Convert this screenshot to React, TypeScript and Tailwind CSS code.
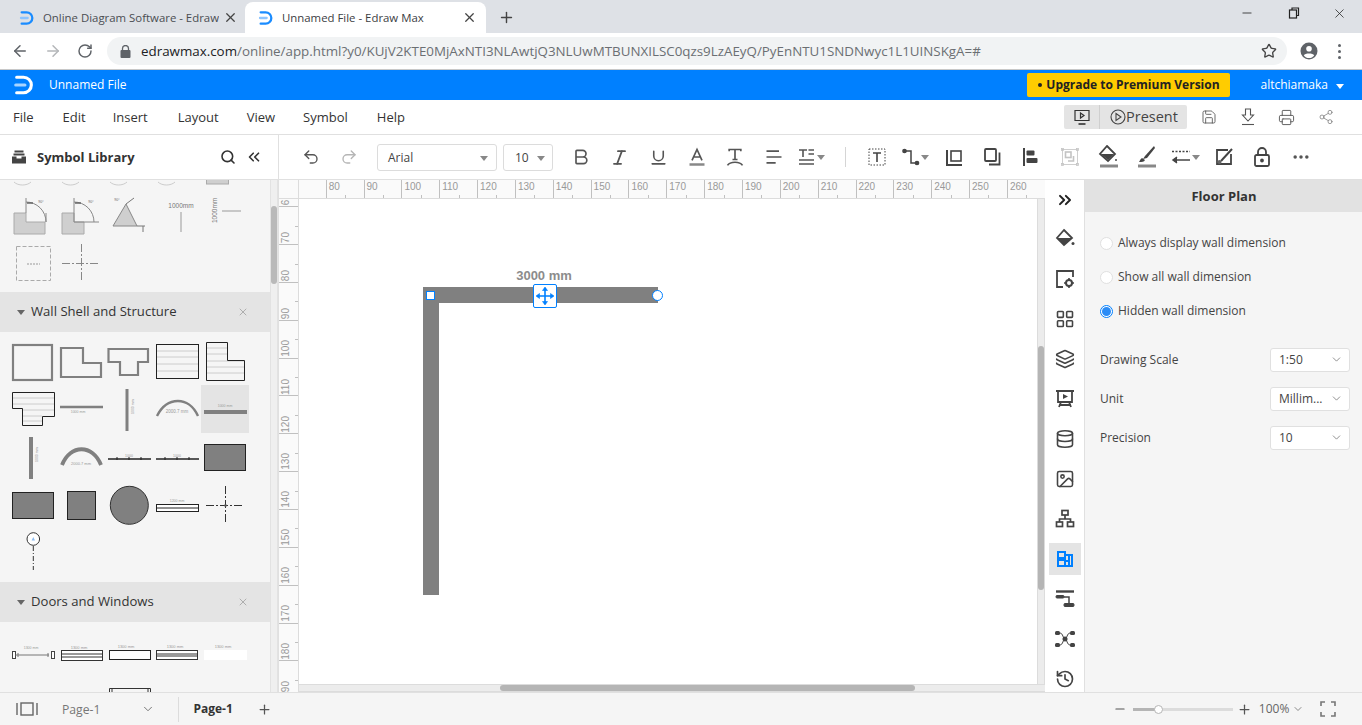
import type { ReactNode } from "react"
import {
  ArrowLeft, ArrowRight, RotateCw, Star, X, Plus, Minus, Search, ChevronsLeft, ChevronsRight,
  ChevronDown, Undo2, Redo2, Bold, Italic, Underline, Share2, Printer, Save, MoreHorizontal,
  Layers, Database, Image, History, LayoutGrid,
} from "lucide-react"

// ── Small helpers ─────────────────────────────────────────────
const BLUE = "#0080ff"
const RULER_TOP = [80, 90, 100, 110, 120, 130, 140, 150, 160, 170, 180, 190, 200, 210, 220, 230, 240, 250, 260]
const RULER_LEFT = [60, 70, 80, 90, 100, 110, 120, 130, 140, 150, 160, 170, 180, 190]

function Svg({ size = 20, children, stroke = "#444", w = 2 }: { size?: number; children: ReactNode; stroke?: string; w?: number }) {
  return (
    <svg width={size} height={size} viewBox="0 0 24 24" fill="none" stroke={stroke} strokeWidth={w} strokeLinecap="butt" strokeLinejoin="miter">
      {children}
    </svg>
  )
}

function Logo({ color, bar, size = 18 }: { color: string; bar: string; size?: number }) {
  return (
    <svg width={size} height={size} viewBox="0 0 24 24" fill="none">
      <path d="M4 3.5H11.5A8.5 8.5 0 0 1 11.5 20.5H4" stroke={color} strokeWidth="3.4" strokeLinecap="round" />
      <path d="M3 12H13" stroke={bar} strokeWidth="3.4" strokeLinecap="round" />
    </svg>
  )
}

function Caret({ color = "#888" }: { color?: string }) {
  return <span className="inline-block w-0 h-0 border-x-[4px] border-x-transparent border-t-[5px]" style={{ borderTopColor: color }} />
}

function Cell({ children }: { children: ReactNode }) {
  return <div className="w-[38.5px] h-full shrink-0 flex items-center justify-center">{children}</div>
}

// ── Browser chrome ────────────────────────────────────────────
function BrowserChrome() {
  return (
    <div className="font-['Open_Sans',sans-serif] shrink-0">
      <div className="h-[33px] bg-[#dee1e6] flex items-end relative">
        <div className="w-[245px] h-[31px] flex items-center pl-[19px] pr-[7px] text-[11.4px] text-[#4a4d52]">
          <Logo color="#1a8cff" bar="#8cc4ff" size={16} />
          <span className="ml-[8px] w-[176px] whitespace-nowrap overflow-hidden">Online Diagram Software - Edraw</span>
          <X size={15} strokeWidth={2} className="ml-auto text-[#444]" />
        </div>
        <div className="w-[241px] h-[31px] bg-white rounded-t-[8px] flex items-center pl-[13px] pr-[9px] text-[11.4px] text-[#3c4043]">
          <Logo color="#1a8cff" bar="#8cc4ff" size={16} />
          <span className="ml-[8px] whitespace-nowrap">Unnamed File - Edraw Max</span>
          <X size={15} strokeWidth={2} className="ml-auto text-[#444]" />
        </div>
        <div className="ml-[12px] h-[31px] flex items-center">
          <Plus size={17} strokeWidth={2} className="text-[#444]" />
        </div>
        <div className="ml-auto h-[33px] flex items-start pt-[6px] pr-[15px] text-[#222]">
          <Minus size={14} strokeWidth={1.4} className="mr-[33px]" />
          <svg width="14" height="14" viewBox="0 0 14 14" fill="none" stroke="#222" strokeWidth="1.2" className="mr-[31px]">
            <rect x="2.5" y="4" width="7" height="8" />
            <path d="M5 4V2H11.5V9.5H9.5" />
          </svg>
          <X size={15} strokeWidth={1.2} />
        </div>
      </div>
      <div className="h-[36px] bg-white flex items-center border-b border-[#c8c8c8] box-content">
        <div className="w-[107px] flex items-center pl-[11px] text-[#5f6368]">
          <ArrowLeft size={18} strokeWidth={2} />
          <ArrowRight size={18} strokeWidth={2} className="ml-[15px] text-[#b4b6b9]" />
          <RotateCw size={16} strokeWidth={2.2} className="ml-[15px]" />
        </div>
        <div className="w-[1180px] h-[28px] bg-[#f1f3f4] rounded-full flex items-center pl-[13px] pr-[10px]">
          <svg width="11" height="13" viewBox="0 0 11 13" fill="#5f6368">
            <rect x="0.5" y="5" width="10" height="8" rx="1" />
            <path d="M2.5 5.5V3.5a3 3 0 0 1 6 0v2" fill="none" stroke="#5f6368" strokeWidth="1.3" />
          </svg>
          <span className="ml-[10px] text-[13.37px] whitespace-nowrap text-[#6b6f73]">
            <span className="text-[#202124]">edrawmax.com</span>/online/app.html?y0/KUjV2KTE0MjAxNTI3NLAwtjQ3NLUwMTBUNXILSC0qzs9LzAEyQ/PyEnNTU1SNDNwyc1L1UINSKgA=#
          </span>
          <Star size={16} strokeWidth={2} className="ml-auto text-[#444]" />
        </div>
        <svg width="18" height="18" viewBox="0 0 18 18" className="ml-[13px]">
          <circle cx="9" cy="9" r="8.5" fill="#5f6368" />
          <circle cx="9" cy="6.8" r="2.8" fill="#fff" />
          <path d="M3.8 13.4C5 11 13 11 14.2 13.4C13 15 11 16 9 16S5 15 3.8 13.4Z" fill="#fff" />
        </svg>
        <div className="ml-[20px] flex flex-col gap-[3px]">
          <span className="w-[3px] h-[3px] rounded-full bg-[#5f6368]" />
          <span className="w-[3px] h-[3px] rounded-full bg-[#5f6368]" />
          <span className="w-[3px] h-[3px] rounded-full bg-[#5f6368]" />
        </div>
      </div>
    </div>
  )
}

// ── App header rows ───────────────────────────────────────────
function TitleBar() {
  return (
    <div className="h-[30px] shrink-0 flex items-center text-white text-[12px]" style={{ background: BLUE }}>
      <div className="ml-[13px]"><Logo color="#fff" bar="#a8d4ff" size={22} /></div>
      <span className="ml-[14px]">Unnamed File</span>
      <div className="ml-auto h-[24px] w-[203px] rounded-[2px] bg-[#ffcc00] flex items-center justify-center text-[12px] font-bold text-[#222] whitespace-nowrap">
        <span className="w-[4px] h-[4px] rounded-full bg-[#222] mr-[4px]" />Upgrade to Premium Version
      </div>
      <span className="ml-[30px]">altchiamaka</span>
      <span className="ml-[8px] mr-[18px]"><Caret color="#fff" /></span>
    </div>
  )
}

function MenuBar() {
  const items: [string, number][] = [["File", 13], ["Edit", 29], ["Insert", 27], ["Layout", 30], ["View", 28], ["Symbol", 28], ["Help", 29]]
  return (
    <div className="h-[35px] shrink-0 bg-white border-b border-[#e0e0e0] flex items-center text-[13px] text-[#333]">
      {items.map(([label, gap]) => (
        <span key={label} className="pt-[1px]" style={{ marginLeft: gap }}>{label}</span>
      ))}
      <div className="ml-auto h-[24px] w-[123px] bg-[#e4e4e4] rounded-[2px] flex items-center">
        <div className="w-[36px] h-full border-r border-[#cfcfcf] flex items-center justify-center">
          <svg width="16" height="17" viewBox="0 0 16 17" fill="none" stroke="#333" strokeWidth="1.2">
            <path d="M1 1.5H15V11.5H1Z" />
            <path d="M6.5 4L10 6.5L6.5 9Z" />
            <path d="M4.5 15H11.5" strokeWidth="1.6" />
          </svg>
        </div>
        <svg width="16" height="16" viewBox="0 0 16 16" fill="none" stroke="#444" strokeWidth="1.1" className="ml-[10px]">
          <circle cx="8" cy="8" r="7" />
          <path d="M6 4.5L11 8L6 11.5Z" />
        </svg>
        <span className="text-[14.5px] text-[#444]">Present</span>
      </div>
      <div className="w-[39px] ml-[2px] flex justify-center"><Save size={16} strokeWidth={1.3} className="text-[#555]" /></div>
      <div className="w-[39px] flex justify-center">
        <svg width="16" height="18" viewBox="0 0 16 18" fill="none" stroke="#555" strokeWidth="1.1">
          <path d="M5.5 1H10.5V7H13.5L8 13L2.5 7H5.5Z" />
          <path d="M2 16.5H14" />
        </svg>
      </div>
      <div className="w-[39px] flex justify-center"><Printer size={17} strokeWidth={1.3} className="text-[#555]" /></div>
      <div className="w-[39px] mr-[17px] flex justify-center"><Share2 size={16} strokeWidth={1.1} className="text-[#777]" /></div>
    </div>
  )
}

function Toolbar() {
  return (
    <div className="h-[45px] shrink-0 bg-white border-b border-[#e0e0e0] flex items-center">
      <div className="w-[279px] h-full border-r border-[#e0e0e0] flex items-center pl-[12px] shrink-0">
        <svg width="14" height="14" viewBox="0 0 14 14" fill="#444">
          <rect x="2.5" y="0.5" width="9" height="2" />
          <rect x="1.5" y="3.5" width="11" height="2" />
          <path d="M0 6.5H4.5V8.5H9.5V6.5H14V13.5H0Z" />
        </svg>
        <span className="ml-[11px] pt-[1px] text-[13px] font-bold text-[#333]">Symbol Library</span>
        <Search size={16} strokeWidth={2.4} className="ml-auto text-[#333]" />
        <ChevronsLeft size={18} strokeWidth={2.2} className="ml-[9px] mr-[15px] text-[#333]" />
      </div>
      <div className="ml-[13px] w-[38px] flex justify-center"><Undo2 size={18} strokeWidth={1.8} className="text-[#555]" /></div>
      <div className="w-[38px] flex justify-center"><Redo2 size={18} strokeWidth={1.8} className="text-[#b5b5b5]" /></div>
      <div className="ml-[9px] w-[120px] h-[27px] border border-[#dcdcdc] rounded-[3px] flex items-center pl-[10px] pr-[8px] text-[12px] text-[#444]">
        <span className="pt-[1px]">Arial</span><span className="ml-auto"><Caret /></span>
      </div>
      <div className="ml-[6px] w-[50px] h-[27px] border border-[#dcdcdc] rounded-[3px] flex items-center pl-[11px] pr-[7px] text-[12px] text-[#444]">
        <span className="pt-[1px]">10</span><span className="ml-auto"><Caret /></span>
      </div>
      <div className="ml-[9px] h-full flex items-center">
        <Cell><Bold size={20} strokeWidth={2} className="text-[#555]" /></Cell>
        <Cell><Italic size={19} strokeWidth={2.2} className="text-[#555]" /></Cell>
        <Cell><Underline size={19} strokeWidth={2} className="text-[#555]" /></Cell>
        <Cell>
          <Svg><path d="M6 16L12 3L18 16M8 12H16" stroke="#555" /><path d="M3 21H21" stroke="#888" strokeWidth="3" /></Svg>
        </Cell>
        <Cell>
          <Svg><path d="M5 5V3H19V5M12 3V15M9 15H15" stroke="#555" /><path d="M3 22C6 17 18 17 21 22" stroke="#555" /></Svg>
        </Cell>
        <Cell>
          <Svg><path d="M3 5H18M3 12H21M3 19H14" stroke="#555" /></Svg>
        </Cell>
        <Cell>
          <div className="flex items-center gap-[2px]">
            <svg width="16" height="18" viewBox="0 0 16 18" fill="none" stroke="#555" strokeWidth="1.6">
              <path d="M0 2H8M4 2V9M9.5 2H15M9.5 6H15M0 12H15M0 16H15" />
            </svg>
            <Caret />
          </div>
        </Cell>
        <div className="w-[13.5px] shrink-0" />
        <span className="w-px h-[20px] bg-[#d5d5d5] shrink-0" />
        <div className="w-[12px] shrink-0" />
        <Cell>
          <svg width="18" height="18" viewBox="0 0 18 18" fill="none" stroke="#444">
            <rect x="1" y="1" width="16" height="16" strokeDasharray="1.5 1.5" />
            <path d="M5 5H13M9 5V14" strokeWidth="1.6" />
          </svg>
        </Cell>
        <Cell>
          <div className="flex items-center gap-[1px]">
            <svg width="18" height="18" viewBox="0 0 18 18" fill="none" stroke="#444" strokeWidth="1.5">
              <path d="M3 3H9V15H14" /><circle cx="2.5" cy="3" r="1.6" fill="#444" /><circle cx="15" cy="15" r="1.6" fill="#444" />
            </svg>
            <Caret />
          </div>
        </Cell>
        <Cell>
          <svg width="17" height="17" viewBox="0 0 17 17" fill="none" stroke="#444" strokeWidth="2">
            <path d="M1 1V16H16" /><rect x="5" y="2" width="10" height="10" strokeWidth="1.6" />
          </svg>
        </Cell>
        <Cell>
          <svg width="17" height="18" viewBox="0 0 17 18" fill="none" stroke="#444" strokeWidth="1.8">
            <rect x="1" y="1" width="11" height="12" rx="1" /><path d="M15.5 4.5V16.5H5" />
          </svg>
        </Cell>
        <Cell>
          <svg width="16" height="18" viewBox="0 0 16 18" fill="#444">
            <rect x="0" y="0" width="2" height="18" /><rect x="3.5" y="2.5" width="8" height="5" rx="1" /><rect x="3.5" y="10" width="11" height="5" rx="1" />
          </svg>
        </Cell>
        <Cell>
          <svg width="18" height="18" viewBox="0 0 18 18" fill="none" stroke="#c4c4c4" strokeWidth="1.3">
            <rect x="1.5" y="1.5" width="15" height="15" strokeWidth="0.8" />
            <rect x="0.5" y="0.5" width="2" height="2" strokeWidth="0.8" /><rect x="15.5" y="0.5" width="2" height="2" strokeWidth="0.8" />
            <rect x="0.5" y="15.5" width="2" height="2" strokeWidth="0.8" /><rect x="15.5" y="15.5" width="2" height="2" strokeWidth="0.8" />
            <rect x="4.5" y="4" width="5.5" height="5.5" strokeWidth="1.6" /><path d="M12.5 8V13H7" strokeWidth="1.6" />
          </svg>
        </Cell>
        <Cell>
          <svg width="20" height="24" viewBox="0 0 20 24" fill="none">
            <path d="M9 1L17 9L10 16L2 9Z" stroke="#444" strokeWidth="1.8" /><path d="M3 9H16L10 15Z" fill="#444" /><circle cx="18" cy="15" r="1" fill="#444" />
            <path d="M2 21H20" stroke="#888" strokeWidth="3" />
          </svg>
        </Cell>
        <Cell>
          <svg width="20" height="24" viewBox="0 0 20 24" fill="none">
            <path d="M17 1L8 11L6 14L10 13L18 3Z" fill="#444" /><path d="M5 13C3 14 3 16 2 17C5 17 7 17 8 15Z" fill="#444" />
            <path d="M1 21H19" stroke="#888" strokeWidth="3" />
          </svg>
        </Cell>
        <Cell>
          <div className="flex items-center gap-[1px]">
            <svg width="20" height="16" viewBox="0 0 20 16" fill="none" stroke="#444" strokeWidth="1.5">
              <path d="M1 2.5H19" strokeDasharray="2 1.5" /><path d="M19 11H3" /><path d="M6 8L2 11L6 14" fill="#444" />
            </svg>
            <Caret />
          </div>
        </Cell>
        <Cell>
          <svg width="18" height="18" viewBox="0 0 18 18" fill="none" stroke="#444" strokeWidth="1.8">
            <path d="M13 2H2V16H16V6" /><path d="M17 1L6 13" strokeWidth="2" /><circle cx="4.5" cy="14" r="2" fill="#666" stroke="none" />
          </svg>
        </Cell>
        <Cell>
          <svg width="16" height="20" viewBox="0 0 16 20" fill="none" stroke="#444" strokeWidth="1.8">
            <rect x="1" y="8" width="14" height="11" rx="1.5" /><path d="M4 8V5a4 4 0 0 1 8 0v3" /><circle cx="8" cy="13.5" r="1" fill="#444" />
          </svg>
        </Cell>
        <Cell><MoreHorizontal size={20} strokeWidth={2.2} className="text-[#555]" /></Cell>
      </div>
    </div>
  )
}

// ── Symbol library ────────────────────────────────────────────
function Sym({ children, active }: { children?: ReactNode; active?: boolean }) {
  return (
    <div className={active ? "w-[48px] h-[48px] bg-[#e4e4e4]" : "w-[48px] h-[48px]"}>
      <svg width="48" height="48" viewBox="0 0 48 48" fill="none">{children}</svg>
    </div>
  )
}

function Tiny({ x, y, children, size = 3.5, color = "#999" }: { x: number; y: number; children: ReactNode; size?: number; color?: string }) {
  return <text x={x} y={y} fontSize={size} fill={color} textAnchor="middle" fontFamily="Liberation Sans, sans-serif">{children}</text>
}

function SymbolGrid({ children, className = "" }: { children: ReactNode; className?: string }) {
  return <div className={"ml-[9px] grid grid-cols-[repeat(5,48px)] auto-rows-[48px] " + className}>{children}</div>
}

function SectionHead({ title }: { title: string }) {
  return (
    <div className="h-[40px] bg-[#e4e4e4] flex items-center pl-[17px] pr-[21px] text-[13.1px] text-[#333]">
      <Caret color="#666" />
      <span className="ml-[6px]">{title}</span>
      <X size={12} strokeWidth={1} className="ml-auto text-[#777]" />
    </div>
  )
}

const hatch = "#cfcfcf"

function SymbolPanel() {
  return (
    <div className="w-[279px] shrink-0 flex bg-[#f5f5f5] overflow-hidden border-r border-[#e0e0e0]">
      <div className="w-[270px] shrink-0 overflow-hidden">
        <SymbolGrid className="-mt-[37px] mb-[5px]">
          <Sym><path d="M5 39C9 43 18 43 22 39" stroke="#ccc" /></Sym>
          <Sym><path d="M5 39C9 43 18 43 22 39" stroke="#ccc" /></Sym>
          <Sym><path d="M5 39C9 43 18 43 22 39" stroke="#ccc" /></Sym>
          <Sym><path d="M5 39C9 43 18 43 22 39" stroke="#ccc" /></Sym>
          <Sym><rect x="5.5" y="30" width="22" height="11" fill={hatch} stroke="#aaa" /></Sym>

          <Sym>
            <path d="M5 22H17V31H36V43H5Z" fill={hatch} stroke="#aaa" />
            <path d="M17 7V22M17 11A20 20 0 0 1 37 31M37 31V22" stroke="#888" />
            <path d="M18 12H24" stroke="#666" strokeWidth="1.5" />
            <Tiny x={32} y={12} color="#666">90°</Tiny>
          </Sym>
          <Sym>
            <path d="M5 22H17V31H27V43H5Z" fill={hatch} stroke="#aaa" />
            <path d="M17 7V31H42M17 11A20 20 0 0 1 37 31" stroke="#888" />
            <path d="M18 12H24" stroke="#666" strokeWidth="1.5" />
            <Tiny x={34} y={12} color="#666">90°</Tiny>
          </Sym>
          <Sym>
            <path d="M8 35L21 13L32 35Z" fill={hatch} stroke="#888" />
            <path d="M21 13L29 7M32 35H40M38 35V41" stroke="#777" />
            <Tiny x={12} y={10} color="#666">90°</Tiny>
          </Sym>
          <Sym>
            <Tiny x={28} y={17} size={6.5} color="#777">1000mm</Tiny>
            <path d="M28 21V41" stroke="#999" />
          </Sym>
          <Sym>
            <text transform="translate(16 32) rotate(-90)" fontSize="6.5" fill="#777" fontFamily="Liberation Sans, sans-serif">1000mm</text>
            <path d="M21 20H40" stroke="#999" />
          </Sym>

          <Sym>
            <rect x="7.5" y="7.5" width="34" height="34" stroke="#aaa" strokeDasharray="4 2" />
            <path d="M18 25H31" stroke="#999" strokeDasharray="2 1" />
          </Sym>
          <Sym><path d="M5 24.5H43M24.5 5V42" stroke="#888" strokeDasharray="8 2 2 2" /></Sym>
        </SymbolGrid>

        <SectionHead title="Wall Shell and Structure" />

        <SymbolGrid className="mt-[5px] mb-[5px]">
          <Sym><rect x="4" y="8" width="39" height="35" stroke="#808080" strokeWidth="2.2" fill="#f5f5f5" /></Sym>
          <Sym><path d="M4 11H26V26H44V40H4Z" stroke="#808080" strokeWidth="2.2" /></Sym>
          <Sym><path d="M3.5 12H43V25H33V38H15V25H3.5Z" stroke="#808080" strokeWidth="2.2" /></Sym>
          <Sym>
            <path d="M4 14H45M4 20H45M4 27H45M4 34H45" stroke="#ccc" />
            <rect x="3.5" y="7.5" width="42" height="34" stroke="#222" />
          </Sym>
          <Sym>
            <path d="M6 11H26M6 17H26M6 24H43M6 30H43M6 36H43" stroke="#ccc" />
            <path d="M5.5 5.5H26.5V23.5H43.5V43.5H5.5Z" stroke="#222" />
          </Sym>

          <Sym>
            <path d="M4 13H45M4 19H45M14 25H45M14 31H33M14 36H33" stroke="#ccc" />
            <path d="M3.5 7.5H45.5V31.5H33.5V40.5H13.5V23.5H3.5Z" stroke="#222" />
          </Sym>
          <Sym><path d="M3 22H46" stroke="#808080" strokeWidth="2.6" /><Tiny x={21} y={28}>1000 mm</Tiny></Sym>
          <Sym>
            <path d="M22 4V46" stroke="#808080" strokeWidth="3" />
            <text transform="translate(29 29) rotate(-90)" fontSize="3.5" fill="#999" fontFamily="Liberation Sans, sans-serif">1000 mm</text>
          </Sym>
          <Sym>
            <path d="M4 31C14 11 36 11 45 31" stroke="#808080" strokeWidth="2.4" />
            <Tiny x={24} y={28} size={4.5}>2000.7 mm</Tiny>
          </Sym>
          <Sym active>
            <path d="M3 27H46" stroke="#808080" strokeWidth="4" />
            <Tiny x={24} y={22}>1000 mm</Tiny>
          </Sym>

          <Sym>
            <path d="M22 4V46" stroke="#808080" strokeWidth="4" />
            <text transform="translate(29 29) rotate(-90)" fontSize="3.5" fill="#999" fontFamily="Liberation Sans, sans-serif">1000 mm</text>
          </Sym>
          <Sym>
            <path d="M5 32C13 11 36 11 44 32" stroke="#808080" strokeWidth="3.8" />
            <Tiny x={24} y={32} size={4}>2000.7 mm</Tiny>
          </Sym>
          <Sym>
            <path d="M3 26H46" stroke="#222" strokeWidth="1.4" />
            <path d="M12 24V27M24 24V27M36 24V27" stroke="#222" />
            <Tiny x={24} y={24}>1000</Tiny>
          </Sym>
          <Sym>
            <path d="M3 26H46" stroke="#222" strokeWidth="1.4" />
            <path d="M12 24V27M24 24V27M36 24V27" stroke="#222" />
            <Tiny x={24} y={24}>1000</Tiny>
          </Sym>
          <Sym><rect x="3.5" y="11.5" width="41" height="26" fill="#808080" stroke="#222" /></Sym>

          <Sym><rect x="3.5" y="11.5" width="41" height="26" fill="#808080" stroke="#222" /></Sym>
          <Sym><rect x="10.5" y="10.5" width="28" height="28" fill="#808080" stroke="#222" /></Sym>
          <Sym><circle cx="24.3" cy="24.3" r="19" fill="#808080" stroke="#333" /></Sym>
          <Sym>
            <rect x="3.5" y="23.5" width="42" height="7" fill="#fff" stroke="#222" />
            <path d="M4 27H45" stroke="#222" />
            <Tiny x={24} y={21}>1200 mm</Tiny>
          </Sym>
          <Sym>
            <path d="M5 24.5H43M24.5 5V43" stroke="#333" strokeDasharray="8 2 2 2" />
            <circle cx="24.5" cy="24.5" r="1.3" fill="#555" />
          </Sym>

          <Sym>
            <circle cx="24.3" cy="10" r="6.3" fill="#fff" stroke="#333" />
            <path d="M24.3 8L26 11.5H22.6Z" fill="#8cbcf0" />
            <path d="M24.3 17V41" stroke="#333" strokeDasharray="5 2 1 2" />
          </Sym>
        </SymbolGrid>

        <SectionHead title="Doors and Windows" />

        <SymbolGrid className="mt-[9px]">
          <Sym>
            <rect x="3.5" y="20.5" width="3" height="7" stroke="#444" fill="#fff" />
            <rect x="42.5" y="20.5" width="3" height="7" stroke="#444" fill="#fff" />
            <path d="M6.5 24H9M9 22V26M39 22V26M9 24H40" stroke="#777" />
            <Tiny x={22} y={18}>1300 mm</Tiny>
          </Sym>
          <Sym>
            <rect x="4.5" y="19.5" width="41" height="10" stroke="#333" fill="#fff" />
            <path d="M5 23H45M5 26H45" stroke="#333" />
            <Tiny x={22} y={18} size={4}>1300 mm</Tiny>
          </Sym>
          <Sym>
            <rect x="4.5" y="19.5" width="41" height="9" stroke="#222" fill="#fff" />
            <Tiny x={21} y={17} size={4}>1300 mm</Tiny>
          </Sym>
          <Sym>
            <rect x="3.5" y="19.5" width="41" height="9" stroke="#333" fill="#fff" />
            <path d="M4 23H44M4 25H44" stroke="#333" />
            <Tiny x={22} y={17} size={4}>1300 mm</Tiny>
          </Sym>
          <Sym>
            <rect x="3" y="19" width="43" height="10" fill="#fff" />
            <Tiny x={22} y={17} size={4}>1300 mm</Tiny>
          </Sym>

          <Sym />
          <Sym />
          <Sym><path d="M4.5 16V9.5H45.5V16M7 10V14M43 10V14" stroke="#333" /></Sym>
        </SymbolGrid>
      </div>
      <div className="w-[8px] shrink-0 bg-[#efefef] border-x border-[#e2e2e2]">
        <div className="mt-[26px] h-[78px] bg-[#b9b9b9] rounded-[3px]" />
      </div>
    </div>
  )
}

// ── Canvas ────────────────────────────────────────────────────
function TopRuler() {
  return (
    <div className="h-[19px] bg-[#fafafa] border-b border-[#dcdcdc] flex overflow-hidden pl-[26.7px] text-[10px] text-[#999] font-['Liberation_Sans',sans-serif]">
      {RULER_TOP.map(n => (
        <div key={n} className="w-[37.85px] shrink-0 h-full border-l border-[#c0c0c0] relative pl-[2px] leading-[14px]">
          {n}
          <span className="absolute left-1/2 bottom-0 w-px h-[3px] bg-[#c0c0c0]" />
        </div>
      ))}
    </div>
  )
}

function LeftRuler() {
  return (
    <div className="w-[20px] shrink-0 bg-[#fafafa] border-r border-[#dcdcdc] overflow-hidden text-[10px] text-[#999] font-['Liberation_Sans',sans-serif]">
      <div className="-mt-[29.6px]">
        {RULER_LEFT.map(n => (
          <div key={n} className="h-[37.85px] border-b border-[#c0c0c0] relative">
            <span className="absolute left-[2px] bottom-[1px] [writing-mode:vertical-rl] rotate-180 leading-none">{n}</span>
            <span className="absolute right-0 top-1/2 h-px w-[3px] bg-[#c0c0c0]" />
          </div>
        ))}
      </div>
    </div>
  )
}

function Canvas() {
  return (
    <div className="flex-1 flex flex-col min-w-0 bg-[#fafafa]">
      <div className="flex h-[19px] shrink-0">
        <div className="w-[20px] shrink-0 bg-[#fafafa] border-b border-r border-[#dcdcdc]" />
        <div className="flex-1 min-w-0"><TopRuler /></div>
      </div>
      <div className="flex-1 flex min-h-0">
        <LeftRuler />
        <div className="flex-1 flex flex-col min-w-0">
          <div className="flex-1 flex min-h-0">
            <div className="flex-1 bg-white relative overflow-hidden">
              {/* wall drawn on the sheet */}
              <span className="absolute left-[124px] top-[67px] w-[242px] text-center text-[13px] font-semibold text-[#8c8c8c] font-['Liberation_Sans',sans-serif]">3000 mm</span>
              <div className="absolute left-[124px] top-[88px] w-[235px] h-[16px] bg-[#808080]" />
              <div className="absolute left-[124px] top-[88px] w-[16px] h-[308px] bg-[#808080]" />
              <div className="absolute left-[127px] top-[92px] w-[9px] h-[9px] bg-white border border-[#0080ff]" />
              <div className="absolute left-[353px] top-[91px] w-[11px] h-[11px] rounded-full bg-white border border-[#0080ff]" />
              <div className="absolute left-[234px] top-[85px] w-[24px] h-[24px] rounded-[2px] bg-white border border-[#0080ff] flex items-center justify-center">
                <svg width="20" height="20" viewBox="0 0 20 20" fill="#0080ff" stroke="#0080ff" strokeWidth="1.6">
                  <path d="M2 10H18M10 2V18" fill="none" />
                  <path d="M10 1L7.5 4.5H12.5ZM10 19L7.5 15.5H12.5ZM1 10L4.5 7.5V12.5ZM19 10L15.5 7.5V12.5Z" strokeWidth="0.6" />
                </svg>
              </div>
            </div>
            <div className="w-[8px] shrink-0 bg-[#ececec] border-x border-[#dcdcdc]">
              <div className="mt-[147px] h-[244px] bg-[#b5b5b5] rounded-[3px]" />
            </div>
          </div>
          <div className="h-[8px] shrink-0 bg-[#ececec] border-y border-[#dcdcdc] flex">
            <div className="ml-[201px] w-[415px] bg-[#b5b5b5] rounded-[3px]" />
          </div>
        </div>
      </div>
    </div>
  )
}

// ── Right side ────────────────────────────────────────────────
function Rail() {
  const icon = "text-[#444]"
  return (
    <div className="w-[40px] shrink-0 bg-white border-r border-[#e0e0e0] flex flex-col items-center overflow-hidden">
      <div className="h-[40px] shrink-0 flex items-center"><ChevronsRight size={20} strokeWidth={2.4} className="text-[#222]" /></div>
      <div className="h-[40px] shrink-0 -mt-[1px] flex items-center pb-[2px]">
        <svg width="20" height="20" viewBox="0 0 20 20" fill="none">
          <path d="M9 2L17 10L9 17L2 10Z" stroke="#444" strokeWidth="1.8" /><path d="M2.5 10H17L9 17Z" fill="#444" /><circle cx="18" cy="15.5" r="1.5" fill="#444" />
        </svg>
      </div>
      <div className="h-[40px] shrink-0 flex items-center">
        <svg width="20" height="20" viewBox="0 0 20 20" fill="none" stroke="#444" strokeWidth="1.8">
          <path d="M8 18H2V2H18V8" />
          <circle cx="14" cy="14" r="3" strokeWidth="2" /><path d="M14 9V11M14 17V19M9 14H11M17 14H19" strokeWidth="1.6" />
        </svg>
      </div>
      <div className="h-[40px] shrink-0 flex items-center"><LayoutGrid size={20} strokeWidth={1.9} className={icon} /></div>
      <div className="h-[40px] shrink-0 flex items-center"><Layers size={20} strokeWidth={1.9} className={icon} /></div>
      <div className="h-[40px] shrink-0 flex items-center">
        <svg width="20" height="20" viewBox="0 0 20 20" fill="none" stroke="#444" strokeWidth="1.8">
          <path d="M1 2H19M3 2V13H17V2M6 13L4 18M14 13L16 18M4 16H16" />
          <path d="M8 5L13 7.5L8 10Z" fill="#444" stroke="none" />
        </svg>
      </div>
      <div className="h-[40px] shrink-0 flex items-center"><Database size={20} strokeWidth={1.9} className={icon} /></div>
      <div className="h-[40px] shrink-0 flex items-center"><Image size={20} strokeWidth={1.9} className={icon} /></div>
      <div className="h-[40px] shrink-0 flex items-center">
        <svg width="20" height="20" viewBox="0 0 20 20" fill="none" stroke="#444" strokeWidth="1.7">
          <rect x="7" y="1.5" width="6" height="4.5" /><rect x="1.5" y="13" width="6" height="4.5" /><rect x="12.5" y="13" width="6" height="4.5" />
          <path d="M10 6V10M4.5 13V10H15.5V13" />
        </svg>
      </div>
      <div className="h-[40px] shrink-0 flex items-center">
        <div className="w-[32px] h-[32px] bg-[#e4e4e4] flex items-center justify-center">
          <svg width="16" height="16" viewBox="0 0 16 16">
            <path d="M0 0H9V3H16V16H0Z" fill={BLUE} />
            <path d="M2 2H7V6H2ZM2 10H7V14H2ZM9 5H11V9H9ZM13 5H14V14H13ZM9 11H11V14H9Z" fill="#e4e4e4" />
          </svg>
        </div>
      </div>
      <div className="h-[40px] shrink-0 flex items-center">
        <svg width="20" height="18" viewBox="0 0 20 18" fill="none" stroke="#444">
          <path d="M1 1.5H19" strokeWidth="2.4" /><rect x="1" y="5.5" width="8" height="2.5" rx="1" fill="#444" strokeWidth="1" />
          <path d="M9 7H14V14" strokeWidth="1.5" /><rect x="9" y="13.5" width="10" height="3" rx="1" fill="#444" strokeWidth="1" />
        </svg>
      </div>
      <div className="h-[40px] shrink-0 flex items-center">
        <svg width="20" height="18" viewBox="0 0 20 18" fill="#444">
          <rect x="0" y="1" width="5" height="4" rx="1.5" /><rect x="15" y="1" width="5" height="4" rx="1.5" />
          <rect x="0" y="13" width="5" height="4" rx="1.5" /><rect x="15" y="13" width="5" height="4" rx="1.5" />
          <circle cx="10" cy="9" r="2.5" /><path d="M5 3C8 3 8 9 10 9S12 3 15 3M5 15C8 15 8 9 10 9S12 15 15 15" fill="none" stroke="#444" />
        </svg>
      </div>
      <div className="h-[40px] shrink-0 flex items-center"><History size={20} strokeWidth={2} className={icon} /></div>
    </div>
  )
}

function Radio({ label, checked }: { label: string; checked?: boolean }) {
  return (
    <div className="h-[34px] flex items-center">
      <span className={"w-[13px] h-[13px] rounded-full bg-white border flex items-center justify-center " + (checked ? "border-[#0080ff]" : "border-[#e0e0e0]")}>
        {checked && <span className="w-[9px] h-[9px] rounded-full bg-[#2b8cf6]" />}
      </span>
      <span className="ml-[5px] text-[12px] text-[#444]">{label}</span>
    </div>
  )
}

function Field({ label, value }: { label: string; value: string }) {
  return (
    <div className="h-[39px] flex items-center justify-between pr-[12px]">
      <span className="text-[12px] text-[#444]">{label}</span>
      <div className="w-[80px] h-[24px] bg-white border border-[#e0e0e0] rounded-[3px] flex items-center pl-[8px] pr-[6px] text-[12px] text-[#444]">
        {value}
        <ChevronDown size={13} strokeWidth={1.5} className="ml-auto text-[#777]" />
      </div>
    </div>
  )
}

function FloorPlan() {
  return (
    <div className="w-[277px] shrink-0 bg-[#f5f5f5]">
      <div className="h-[32px] bg-[#e2e2e2] flex items-center justify-center pt-[1px] pl-[1px] text-[13px] font-bold text-[#333]">Floor Plan</div>
      <div className="pl-[15px] pt-[14px]">
        <Radio label="Always display wall dimension" />
        <Radio label="Show all wall dimension" />
        <Radio label="Hidden wall dimension" checked />
        <div className="mt-[12px]">
          <Field label="Drawing Scale" value="1:50" />
          <Field label="Unit" value="Millim..." />
          <Field label="Precision" value="10" />
        </div>
      </div>
    </div>
  )
}

// ── Status bar ────────────────────────────────────────────────
function StatusBar() {
  return (
    <div className="h-[33px] shrink-0 bg-[#f5f5f5] border-t border-[#e0e0e0] flex items-center text-[12px] text-[#777]">
      <svg width="22" height="14" viewBox="0 0 22 14" fill="none" stroke="#666" strokeWidth="1.4" className="ml-[16px]">
        <rect x="5" y="1" width="12" height="12" /><path d="M1 1V13M21 1V13" />
      </svg>
      <span className="ml-[24px] pt-[3px] text-[12.2px]">Page-1</span>
      <ChevronDown size={14} strokeWidth={1.5} className="ml-[41px] text-[#666]" />
      <span className="ml-[23px] w-px h-[25px] bg-[#dcdcdc]" />
      <span className="ml-[14px] font-bold text-[#333]">Page-1</span>
      <Plus size={15} strokeWidth={2} className="ml-[24px] text-[#555]" />
      <Minus size={14} strokeWidth={2} className="ml-[841px] text-[#555]" />
      <div className="ml-[6px] w-[100px] h-[3px] bg-[#dcdcdc] relative">
        <div className="w-[26px] h-full bg-[#b5b5b5]" />
        <span className="absolute left-[21px] -top-[3px] w-[9px] h-[9px] rounded-full bg-white border border-[#b5b5b5]" />
      </div>
      <Plus size={15} strokeWidth={2} className="ml-[4px] text-[#555]" />
      <span className="ml-[7px] text-[#666]">100%</span>
      <ChevronDown size={12} strokeWidth={1.5} className="ml-[3px] text-[#666]" />
      <svg width="16" height="16" viewBox="0 0 16 16" fill="none" stroke="#777" strokeWidth="1.6" className="ml-[16px]">
        <path d="M1 5V1H5M11 1H15V5M15 11V15H11M5 15H1V11" />
      </svg>
    </div>
  )
}

export default function App() {
  return (
    <div className="w-[1362px] h-[725px] flex flex-col overflow-hidden bg-white font-['Open_Sans',sans-serif]">
      <BrowserChrome />
      <TitleBar />
      <MenuBar />
      <Toolbar />
      <div className="flex-1 flex min-h-0">
        <SymbolPanel />
        <Canvas />
        <Rail />
        <FloorPlan />
      </div>
      <StatusBar />
    </div>
  )
}
